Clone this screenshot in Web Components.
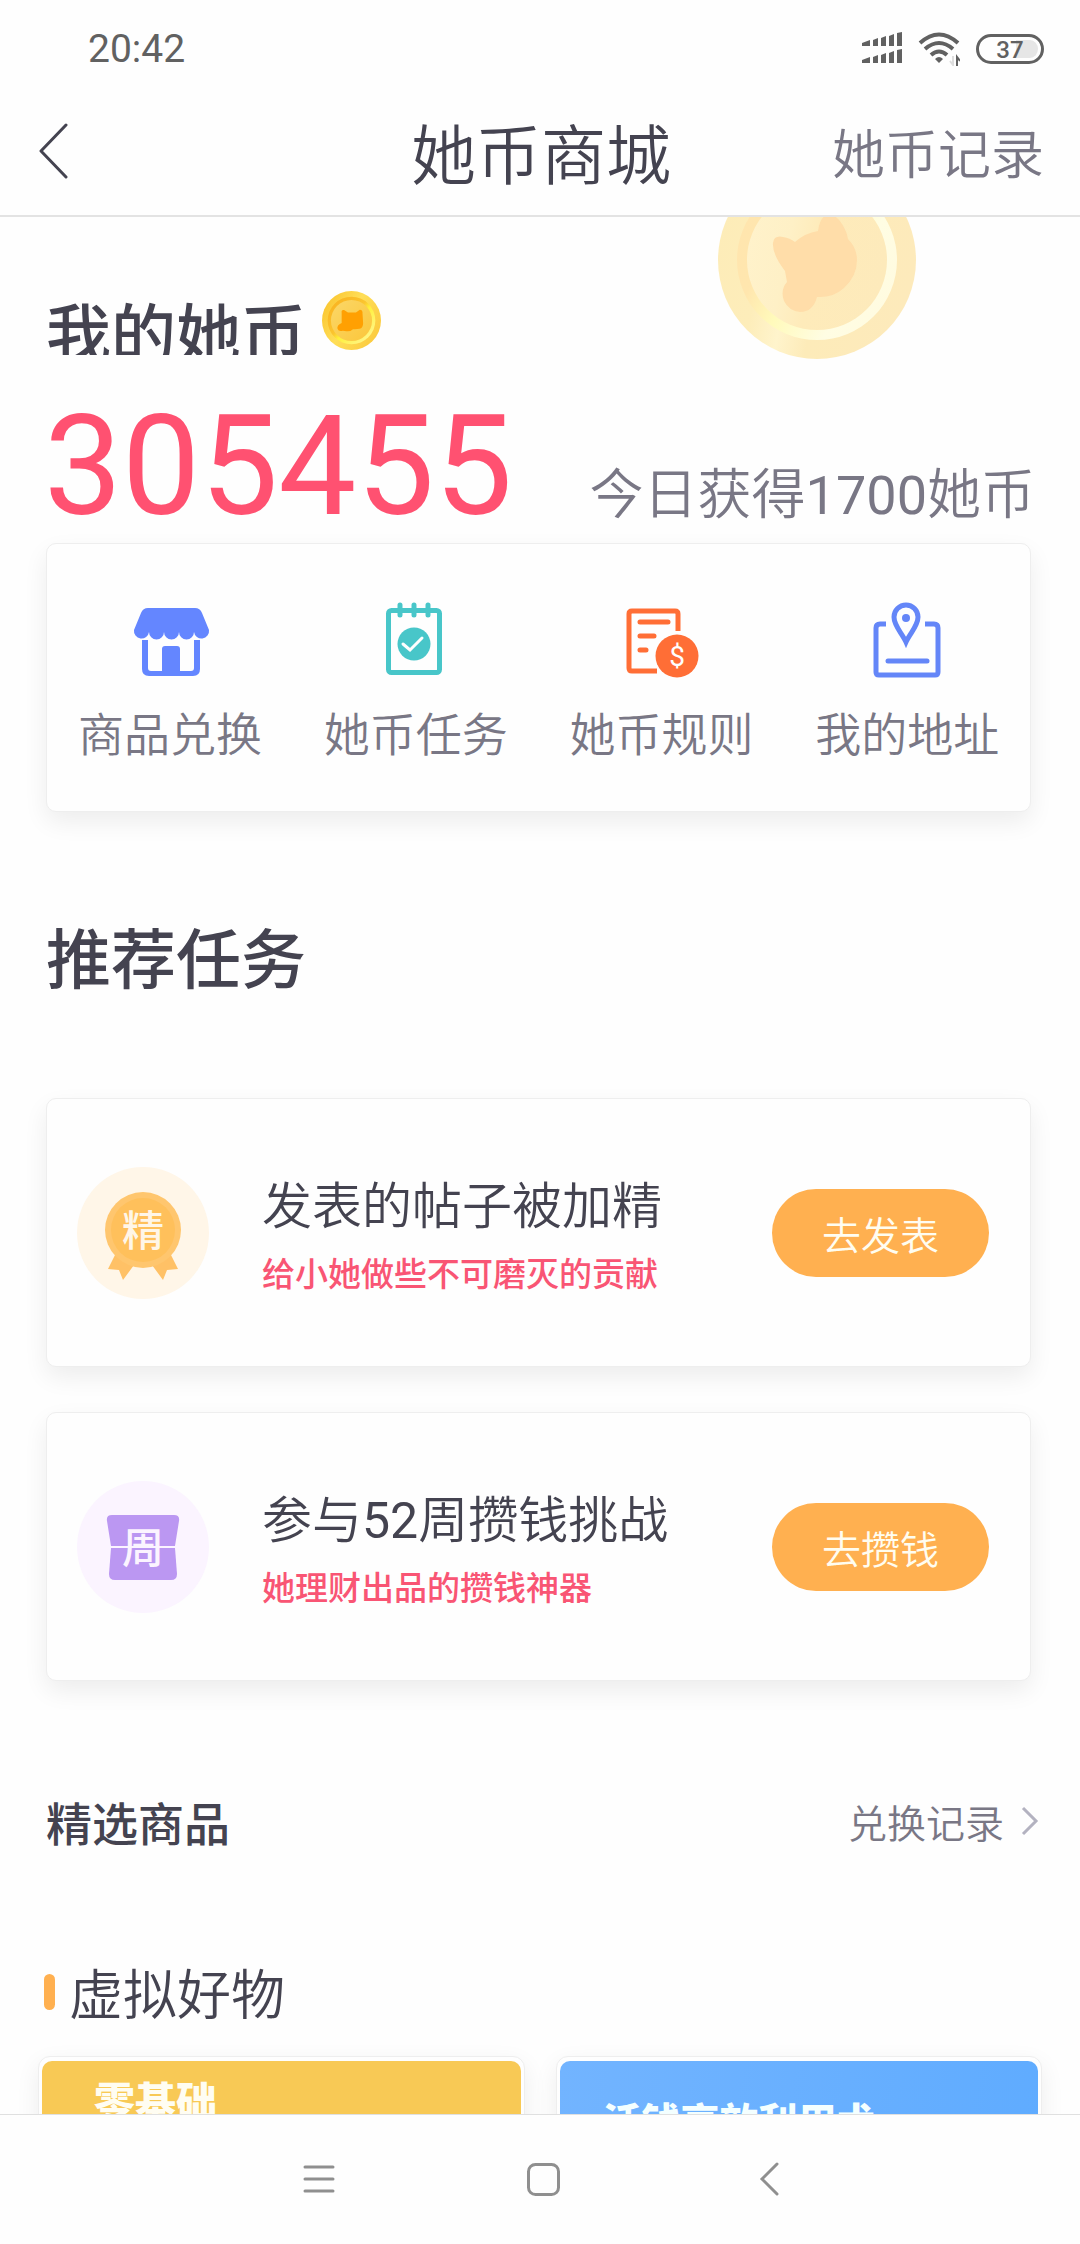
<!DOCTYPE html>
<html lang="zh-CN">
<head>
<meta charset="utf-8">
<meta name="viewport" content="width=device-width, initial-scale=1">
<title>她币商城</title>
<style>
  html, body { margin: 0; height: 100%; }
  body {
    background: #fefefe;
    color: #444350;
    --latin: Roboto, "Noto Sans CJK SC", sans-serif;
    font-family: "Noto Sans CJK SC", sans-serif;
    font-weight: 350;
    --ink: #444350;
    --muted: #797785;
    --accent: #ffb050;
    --pink: #ff5171;
  }
</style>
</head>
<body>
<coin-shop></coin-shop>

<template id="t-coin-shop">
  <style>
    :host { display: flex; flex-direction: column; height: 100vh; }
    main { flex: 1; min-height: 0; overflow: hidden; position: relative; }
    .content { padding: 74px 49px 0 46px; }
    .num { font-weight: 400; }
    h2 { margin: 98px 0; font-size: 65px; line-height: 90px; font-weight: 500; }
    .tasks { display: grid; gap: 45px; }
    .featured { display: flex; justify-content: space-between; align-items: center; margin-top: 110px; }
    h3 { margin: 0; font-size: 46px; line-height: 60px; font-weight: 500; }
    .featured a { display: flex; align-items: center; gap: 16px; margin-right: -8px; font-size: 39px; line-height: 60px; color: var(--muted); text-decoration: none; }
    h4 { display: flex; align-items: center; gap: 14px; margin: 106px 0 29px; font-size: 54px; line-height: 70px; font-weight: 350; }
    h4::before { content: ""; width: 11px; height: 36px; border-radius: 6px; background: var(--accent); margin-left: -2px; }
    .products { display: grid; grid-template-columns: 1fr 1fr; gap: 31px; padding: 0 38px; }
  </style>
  <status-bar></status-bar>
  <title-bar heading="她币商城"><a slot="action" href="#records">她币记录</a></title-bar>
  <main>
    <div class="content">
      <coin-balance amount="305455">今日获得<span class="num">1700</span>她币</coin-balance>
      <quick-menu></quick-menu>
      <h2>推荐任务</h2>
      <div class="tasks">
        <task-card note="给小她做些不可磨灭的贡献" action="去发表">
          <span slot="heading">发表的帖子被加精</span>
          <svg width="132" height="132" viewBox="0 0 132 132" aria-hidden="true">
            <circle cx="66" cy="66" r="66" fill="#fff6e8"/>
            <path d="M39 86 31 102 42 103 46 113 57 98H75L86 113 90 103 101 102 93 86Z" fill="#ffc166"/>
            <circle cx="66" cy="63" r="38" fill="#ffc66e"/>
            <circle cx="66" cy="63" r="32" fill="#ffc05b"/>
            <text x="66" y="79" text-anchor="middle" font-size="42" font-weight="500" fill="#fff6e8">精</text>
          </svg>
        </task-card>
        <task-card note="她理财出品的攒钱神器" action="去攒钱">
          <span slot="heading">参与<span class="num">52</span>周攒钱挑战</span>
          <svg width="132" height="132" viewBox="0 0 132 132" aria-hidden="true">
            <circle cx="66" cy="66" r="66" fill="#fbf4ff"/>
            <path d="M35 34H97Q103 34 102 40L98 65H34L30 40Q29 34 35 34Z" fill="#bb97f2"/>
            <path d="M34 67H98L100 93Q100 99 94 99H38Q32 99 32 93Z" fill="#bb97f2"/>
            <text x="66" y="82" text-anchor="middle" font-size="42" font-weight="500" fill="#fbf4ff">周</text>
          </svg>
        </task-card>
      </div>
      <div class="featured">
        <h3>精选商品</h3>
        <a href="#exchange">兑换记录
          <svg width="19" height="30" viewBox="0 0 19 30" fill="none" stroke="#b3b2c0" stroke-width="3" aria-hidden="true"><path d="M3 2 16 15 3 28"/></svg>
        </a>
      </div>
      <h4>虚拟好物</h4>
    </div>
    <div class="products">
      <product-card tone="gold">零基础</product-card>
      <product-card tone="blue">活钱高效利用术</product-card>
    </div>
  </main>
  <system-nav></system-nav>
</template>

<template id="t-status-bar">
  <style>
    :host { display: flex; align-items: center; justify-content: space-between; height: 80px; padding: 18px 36px 0 88px; box-sizing: border-box; color: #616161; font-family: var(--latin); font-size: 39px; line-height: 80px; font-weight: 400; }
    .icons { display: flex; align-items: center; gap: 16px; }
    svg { display: block; }
  </style>
  <time>20:42</time>
  <div class="icons">
    <svg width="40" height="34" viewBox="0 0 40 34" fill="#616161" aria-hidden="true">
      <path id="r" d="M0 11 8 8V14H0ZM11 8 16 6V14H11ZM19 6 24 4V14H19ZM27 4 32 2V14H27ZM35 1 40 0V14H35Z"/>
      <use href="#r" y="17"/>
    </svg>
    <svg width="42" height="34" viewBox="0 0 42 34" fill="none" stroke="#616161" stroke-width="4" aria-hidden="true">
      <path d="M2 11Q21-6 40 11M7 17Q21 5 35 17M13 23Q21 16 29 23"/>
      <path d="M17 27Q21 23 25 27L21 31Z" fill="#616161" stroke="none"/>
      <path d="M39 34V25L42 29" stroke-width="2"/><path d="M35 24V33L32 29" stroke="#ddd" stroke-width="2"/>
    </svg>
    <svg width="68" height="34" viewBox="0 0 68 34" aria-hidden="true">
      <rect x="1.5" y="3.5" width="65" height="27" rx="13.500" fill="none" stroke="#616161" stroke-width="3"/>
      <path d="M40 8H54A8 9 0 0 1 54 26H40Z" fill="#e6e6e6"/>
      <text x="34" y="26" text-anchor="middle" font-size="24" font-weight="500" fill="#616161">37</text>
    </svg>
  </div>
</template>

<template id="t-title-bar">
  <style>
    :host { display: grid; grid-template-columns: 1fr auto 1fr; align-items: center; height: 137px; padding: 6px 36px 0 38px; box-sizing: border-box; border-bottom: 2px solid #e3e3e3; }
    button { justify-self: start; padding: 0; border: 0; background: none; cursor: pointer; }
    svg { display: block; }
    h1 { margin: 0; font-size: 65px; line-height: 90px; font-weight: 350; }
    ::slotted(a) { justify-self: end; font-size: 53px; line-height: 90px; color: var(--muted); text-decoration: none; }
  </style>
  <button aria-label="返回"><svg width="30" height="56" viewBox="0 0 30 56" fill="none" stroke="#444350" stroke-width="3" stroke-linecap="round" stroke-linejoin="round"><path d="M28 2 3 28 28 54"/></svg></button>
  <h1></h1>
  <slot name="action"></slot>
</template>

<template id="t-coin-balance">
  <style>
    :host { display: block; }
    .label { display: flex; gap: 16px; }
    h2 { margin: 0; height: 64px; overflow: hidden; font-size: 65px; line-height: 78px; font-weight: 500; }
    svg { display: block; }
    .row { display: flex; align-items: baseline; justify-content: space-between; margin: 42px -4px 6px -2px; font-family: var(--latin); font-size: 54px; color: var(--muted); }
    strong { font-size: 139px; line-height: 140px; font-weight: 400; color: var(--pink); }
    .backdrop { position: absolute; top: -56px; right: 164px; }
  </style>
  <svg class="backdrop" width="198" height="198" viewBox="0 0 198 198" aria-hidden="true">
    <defs>
      <linearGradient id="a" x1="0" y1=".3" x2="1" y2=".5"><stop offset="0" stop-color="#fdecb8"/><stop offset=".25" stop-color="#fdedba"/><stop offset=".4" stop-color="#fff4cc"/><stop offset=".55" stop-color="#fdebb9"/><stop offset="1" stop-color="#fdeabb"/></linearGradient>
      <linearGradient id="b" x1="0" y1=".2" x2="1" y2=".7"><stop offset="0" stop-color="#ffe5ae"/><stop offset=".25" stop-color="#ffe6ae"/><stop offset=".45" stop-color="#fffabb"/><stop offset=".75" stop-color="#fffde3"/><stop offset="1" stop-color="#fffbe0"/></linearGradient>
      <linearGradient id="c" x1="0" y1=".3" x2="1" y2=".5"><stop offset="0" stop-color="#fff2cb"/><stop offset=".3" stop-color="#fef0c6"/><stop offset=".5" stop-color="#feebba"/><stop offset="1" stop-color="#fdeabb"/></linearGradient>
    </defs>
    <circle cx="99" cy="99" r="99" fill="url(#a)"/>
    <circle cx="99" cy="99" r="80" fill="url(#b)"/>
    <circle cx="99" cy="99" r="70" fill="url(#c)"/>
    <path d="M55 82Q56 74 65 76 72 77 77 81 87 72 100 70 102 55 110 54 118 53 124 63 129 71 130 78 139 87 139 99 139 115 126 127 115 137 99 136 95 151 82 151 71 150 66 140 62 129 69 121L67 110Q54 93 55 82Z" fill="#ffdda9"/>
  </svg>
  <div class="label">
    <h2>我的她币</h2>
    <svg width="59" height="59" viewBox="0 0 198 198" aria-hidden="true">
      <defs>
        <linearGradient id="d" x1="0" y1=".2" x2="1" y2=".8"><stop offset="0" stop-color="#fac52f"/><stop offset=".45" stop-color="#ffde58"/><stop offset="1" stop-color="#fbc93c"/></linearGradient>
        <linearGradient id="e" x1="0" y1="0" x2="1" y2="1"><stop offset="0" stop-color="#f9ae1c"/><stop offset=".45" stop-color="#fbc52f"/><stop offset=".55" stop-color="#fff03b"/><stop offset="1" stop-color="#fff8a8"/></linearGradient>
        <linearGradient id="f" x1="0" y1="0" x2="1" y2="1"><stop offset="0" stop-color="#fbd768"/><stop offset="1" stop-color="#fbc63a"/></linearGradient>
      </defs>
      <circle cx="99" cy="99" r="99" fill="url(#d)"/>
      <circle cx="99" cy="99" r="80" fill="url(#e)"/>
      <circle cx="99" cy="99" r="69" fill="url(#f)"/>
      <path d="M66 74Q64 62 74 64L87 72H114L127 63Q137 63 136 76L138 108Q138 124 126 127 113 129 104 128 94 137 82 135L70 133Q56 138 52 127 49 114 66 107Z" fill="#ffa002"/>
    </svg>
  </div>
  <div class="row"><strong></strong><span><slot></slot></span></div>
</template>

<template id="t-quick-menu">
  <style>
    :host { display: block; border: 1px solid #eeeeee; border-radius: 10px; background: #fefefe; box-shadow: 0 10px 24px rgba(0,0,0,.07); position: relative; }
    nav { display: grid; grid-template-columns: repeat(4, 1fr); padding: 56px 0 50px; }
    a { display: flex; flex-direction: column; align-items: center; gap: 21px; font-size: 46px; line-height: 60px; color: var(--muted); text-decoration: none; }
    svg { display: block; }
  </style>
  <nav>
    <a href="#goods">
      <svg width="96" height="80" viewBox="0 0 96 80" fill="#6486ff" aria-hidden="true">
        <path d="M26 8H73Q78 8 80 13L87 30A7.500 7.500 0 0 1 72 32 7.500 7.500 0 0 1 57 32 7.500 7.500 0 0 1 42 32 7.500 7.500 0 0 1 27 32 7.500 7.500 0 0 1 12 30L19 13Q21 8 26 8Z"/>
        <path d="M20 40H26V68Q26 71 29 71H40V49Q40 46 43 46H55Q58 46 58 49V71H69Q72 71 72 68V40H78V69Q78 76 71 76H27Q20 76 20 69Z"/>
      </svg>商品兑换</a>
    <a href="#tasks">
      <svg width="96" height="80" viewBox="0 0 96 80" fill="none" stroke="#48c6c9" stroke-width="5" stroke-linecap="round" aria-hidden="true">
        <rect x="20.500" y="10.500" width="51" height="62" rx="3"/>
        <path d="M32 5V15M46 5V15M60 5V15"/>
        <circle cx="46" cy="44" r="16.500" fill="#48c6c9" stroke="none"/>
        <path d="M35 44 42 50 54 38" stroke="#fefefe" stroke-width="3"/>
      </svg>她币任务</a>
    <a href="#rules">
      <svg width="96" height="80" viewBox="0 0 96 80" fill="none" stroke="#ff6e36" stroke-width="5" aria-hidden="true">
        <path d="M65 31V14Q65 11 62 11H19Q16 11 16 14V68Q16 71 19 71H44"/>
        <path d="M27 22H55M27 36H41M27 50H33" stroke-linecap="round"/>
        <circle cx="64" cy="56" r="21.500" fill="#ff6e36" stroke="none"/>
        <text x="64" y="66" text-anchor="middle" font-family="Roboto" font-size="28" font-weight="400" fill="#fefefe" stroke="none">$</text>
      </svg>她币规则</a>
    <a href="#address">
      <svg width="96" height="80" viewBox="0 0 96 80" fill="none" stroke="#6486f8" stroke-width="5" aria-hidden="true">
        <path d="M27 24H21Q17 24 17 28V72Q17 75 20 75H76Q79 75 79 72V28Q79 24 75 24H66"/>
        <path d="M47 42C43 33 35 26 35 17A12 12 0 0 1 59 17C59 26 51 33 47 42Z"/>
        <circle cx="47" cy="18" r="4" fill="#6486f8" stroke="none"/>
        <path d="M29 61H68" stroke-linecap="round"/>
      </svg>我的地址</a>
  </nav>
</template>

<template id="t-task-card">
  <style>
    :host { display: flex; align-items: center; box-sizing: border-box; height: 269px; padding: 0 41px 0 30px; border: 1px solid #eeeeee; border-radius: 10px; background: #fefefe; box-shadow: 0 10px 24px rgba(0,0,0,.07); }
    .text { flex: 1; margin-left: 53px; padding-top: 4px; }
    ::slotted(svg) { display: block; }
    h3 { margin: 0; font-family: var(--latin); font-size: 50px; line-height: 70px; font-weight: 350; }
    p { margin: 5px 0 0; font-size: 33px; line-height: 50px; font-weight: 500; color: #f95574; }
    button { width: 217px; height: 88px; padding: 0; border: 0; border-radius: 44px; background: var(--accent); color: #fffdf0; font-family: var(--latin); font-weight: 350; font-size: 39px; cursor: pointer; }
  </style>
  <slot></slot>
  <div class="text"><h3><slot name="heading"></slot></h3><p></p></div>
  <button></button>
</template>

<template id="t-product-card">
  <style>
    :host { display: block; padding: 4px 3px; border: 1px solid #eeeeee; border-radius: 12px; background: #fefefe; box-shadow: 0 8px 24px rgba(0,0,0,.07); }
    .cover { height: 268px; box-sizing: border-box; padding: 8px 52px; border-radius: 10px; background: #f8c955; color: #fffdf2; font-size: 41px; line-height: 60px; font-weight: 900; }
    :host([tone="blue"]) .cover { padding: 28px 43px; background: linear-gradient(100deg, #72b4ff, #5eabff); font-size: 39px; color: #f4ffff; }
  </style>
  <div class="cover"><slot></slot></div>
</template>

<template id="t-system-nav">
  <style>
    :host { display: flex; justify-content: center; align-items: center; gap: 177px; height: 130px; padding-left: 8px; box-sizing: border-box; border-top: 1px solid #e0e0e0; background: #fefefe; }
    button { padding: 0; border: 0; background: none; cursor: pointer; }
    svg { display: block; }
  </style>
  <button aria-label="菜单"><svg width="48" height="36" viewBox="0 0 48 36" stroke="#8f8f8f" stroke-width="3" stroke-linecap="round"><path d="M10 5H38M10 17H38M10 29H38"/></svg></button>
  <button aria-label="主页"><svg width="48" height="36" viewBox="0 0 48 36" fill="none" stroke="#8f8f8f" stroke-width="3"><rect x="8.500" y="2.500" width="30" height="30" rx="7"/></svg></button>
  <button aria-label="后退"><svg width="48" height="36" viewBox="0 0 48 36" fill="none" stroke="#8f8f8f" stroke-width="3" stroke-linecap="round"><path d="M32 2 17 17 32 32"/></svg></button>
</template>

<script>
  class Base extends HTMLElement {
    constructor() {
      super();
      const tpl = document.getElementById('t-' + this.localName);
      this.attachShadow({ mode: 'open' }).append(tpl.content.cloneNode(true));
    }
    fill(selector, attribute) {
      this.shadowRoot.querySelector(selector).textContent = this.getAttribute(attribute);
    }
  }
  class StatusBar extends Base {}
  class TitleBar extends Base {
    connectedCallback() { this.fill('h1', 'heading'); }
  }
  class CoinBalance extends Base {
    connectedCallback() { this.fill('strong', 'amount'); }
  }
  class QuickMenu extends Base {}
  class TaskCard extends Base {
    connectedCallback() {
      this.fill('p', 'note');
      this.fill('button', 'action');
    }
  }
  class ProductCard extends Base {}
  class SystemNav extends Base {}
  class CoinShop extends Base {}
  customElements.define('status-bar', StatusBar);
  customElements.define('title-bar', TitleBar);
  customElements.define('coin-balance', CoinBalance);
  customElements.define('quick-menu', QuickMenu);
  customElements.define('task-card', TaskCard);
  customElements.define('product-card', ProductCard);
  customElements.define('system-nav', SystemNav);
  customElements.define('coin-shop', CoinShop);
</script>
</body>
</html>
